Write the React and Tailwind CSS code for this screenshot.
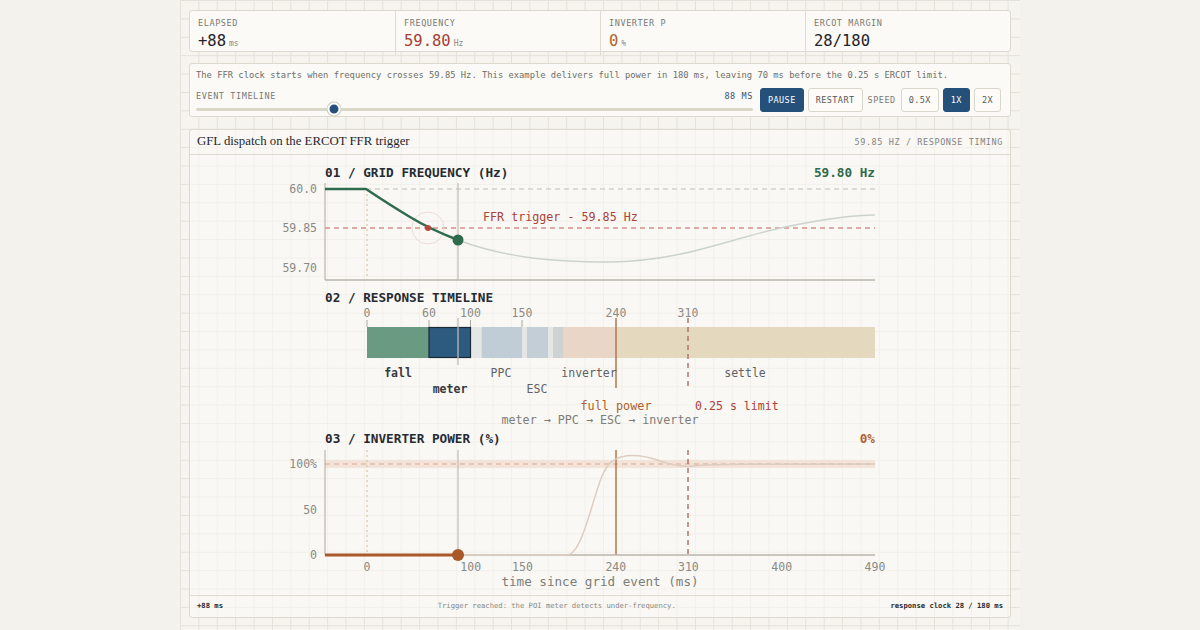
import React from 'react';

const stats = [
  { label: 'ELAPSED', value: '+88', unit: 'ms', color: 'text-[#1f232b]' },
  { label: 'FREQUENCY', value: '59.80', unit: 'Hz', color: 'text-[#a63f36]' },
  { label: 'INVERTER P', value: '0', unit: '%', color: 'text-[#b3622c]' },
  { label: 'ERCOT MARGIN', value: '28/180', unit: '', color: 'text-[#1f232b]' },
];

// time axis: x = 367 + t * 1.0367
const ticks = [
  { t: '0', x: 367 },
  { t: '100', x: 470.7 },
  { t: '150', x: 522.5 },
  { t: '240', x: 615.8 },
  { t: '310', x: 688.4 },
  { t: '400', x: 781.7 },
  { t: '490', x: 875 },
];

function StatCell({ label, value, unit, color }) {
  return (
    <div className="px-[8px] pt-[6px] pb-[5px] border-l border-[#dedbd0] first:border-l-0">
      <div className="text-[8.5px] leading-[12px] tracking-[0.07em] text-[#7a7a76]">{label}</div>
      <div className="flex items-baseline gap-[3px] mt-[3px]">
        <span className={`text-[15.5px] leading-[18px] ${color}`}>{value}</span>
        {unit && <span className="text-[8px] text-[#8a8985]">{unit}</span>}
      </div>
    </div>
  );
}

function Btn({ children, active }) {
  return (
    <button
      className={
        active
          ? 'h-[24px] px-[7px] rounded-[3px] bg-[#25507a] border border-[#25507a] text-white text-[8.5px] tracking-[0.05em]'
          : 'h-[24px] px-[7px] rounded-[3px] bg-[#fdfcf9] border border-[#d9d6cb] text-[#55575a] text-[8.5px] tracking-[0.05em]'
      }
    >
      {children}
    </button>
  );
}

function Chart() {
  const axis = '#b9b6ac';
  const lbl = '#8b8a85';
  return (
    <svg viewBox="189 155 822 440" width="822" height="440" className="block">
      {/* 01 grid frequency */}
      <text x="325" y="177" fontSize="12.7" fontWeight="700" fill="#262b33">01 / GRID FREQUENCY (Hz)</text>
      <text x="875" y="177" textAnchor="end" fontSize="12.7" fontWeight="700" fill="#2f6b4d">59.80 Hz</text>
      <text x="317" y="193" textAnchor="end" fontSize="11.5" fill={lbl}>60.0</text>
      <text x="317" y="232" textAnchor="end" fontSize="11.5" fill={lbl}>59.85</text>
      <text x="317" y="272" textAnchor="end" fontSize="11.5" fill={lbl}>59.70</text>
      <line x1="366" y1="189" x2="875" y2="189" stroke="#bebbb1" strokeWidth="1.2" strokeDasharray="5 4" />
      <line x1="325" y1="228" x2="875" y2="228" stroke="#bd5f57" strokeWidth="1.2" strokeDasharray="5 4" />
      <text x="483" y="221" fontSize="11.7" fill="#a8433b">FFR trigger - 59.85 Hz</text>
      <line x1="367" y1="189" x2="367" y2="280" stroke="#d8c69f" strokeWidth="1.2" strokeDasharray="2 3" />
      <line x1="458" y1="183" x2="458" y2="280" stroke="#c9c8c0" strokeWidth="1.5" />
      <line x1="325" y1="183" x2="325" y2="280" stroke={axis} strokeWidth="1.2" />
      <line x1="325" y1="280" x2="875" y2="280" stroke={axis} strokeWidth="1.4" />
      <path d="M458,240 C500,256 545,262 610,262 C680,262 730,238 790,226 C830,218 855,215 875,215" fill="none" stroke="#ccd3cc" strokeWidth="1.5" />
      <circle cx="428" cy="228" r="16" fill="none" stroke="#ecdcd8" strokeWidth="1" />
      <path d="M325,189 L366,189 C378,197 395,208 410,217 C428,228 445,235 458,240" fill="none" stroke="#2f6b4d" strokeWidth="2.5" strokeLinejoin="round" />
      <circle cx="428" cy="228" r="3" fill="#b5473d" />
      <circle cx="458" cy="240" r="5.5" fill="#2f6b4d" />

      {/* 02 response timeline */}
      <text x="325" y="302" fontSize="12.7" fontWeight="700" fill="#262b33">02 / RESPONSE TIMELINE</text>
      {[
        ['0', 367],
        ['60', 429],
        ['100', 470.5],
        ['150', 522],
        ['240', 616],
        ['310', 688],
      ].map(([t, x]) => (
        <text key={t} x={x} y="317" textAnchor="middle" fontSize="11.5" fill={lbl}>{t}</text>
      ))}
      {[367, 429, 470.5, 522].map((x) => (
        <line key={x} x1={x} y1="320" x2={x} y2="327" stroke="#a9a79f" strokeWidth="1" />
      ))}
      <rect x="367" y="327" width="62" height="31" fill="#6a9a82" />
      <rect x="470.5" y="327" width="11" height="31" fill="#e4e7e6" />
      <rect x="481.5" y="327" width="40.5" height="31" fill="#c0cdd6" />
      <rect x="522" y="327" width="5" height="31" fill="#e3e6e5" />
      <rect x="527" y="327" width="21" height="31" fill="#c3ced7" />
      <rect x="548" y="327" width="5" height="31" fill="#e5e7e5" />
      <rect x="553" y="327" width="10" height="31" fill="#cfd2d3" />
      <rect x="563" y="327" width="53" height="31" fill="#ead6c6" />
      <rect x="616" y="327" width="259" height="31" fill="#e4d8be" />
      <rect x="429" y="327.5" width="41.5" height="30" fill="#2d5a7f" stroke="#1c2a38" strokeWidth="1.2" />
      <line x1="458" y1="318" x2="458" y2="365" stroke="#bdbcb4" strokeWidth="1.3" />
      <line x1="616" y1="318" x2="616" y2="388" stroke="#b5764b" strokeWidth="1.5" />
      <line x1="688" y1="318" x2="688" y2="388" stroke="#b4736c" strokeWidth="1.5" strokeDasharray="5 4" />
      <text x="398" y="377" textAnchor="middle" fontSize="11.5" fontWeight="700" fill="#34383e">fall</text>
      <text x="450" y="393" textAnchor="middle" fontSize="11.5" fontWeight="700" fill="#34383e">meter</text>
      <text x="501" y="377" textAnchor="middle" fontSize="11.5" fill="#5f6166">PPC</text>
      <text x="537" y="393" textAnchor="middle" fontSize="11.5" fill="#5f6166">ESC</text>
      <text x="589" y="377" textAnchor="middle" fontSize="11.5" fill="#5f6166">inverter</text>
      <text x="745" y="377" textAnchor="middle" fontSize="11.5" fill="#5f6166">settle</text>
      <text x="616" y="410" textAnchor="middle" fontSize="11.8" fill="#b0612c">full power</text>
      <text x="695" y="410" fontSize="11.6" fill="#a8433b">0.25 s limit</text>
      <text x="600" y="424" textAnchor="middle" fontSize="11.7" fill="#7d7d79">meter → PPC → ESC → inverter</text>

      {/* 03 inverter power */}
      <text x="325" y="443" fontSize="12.7" fontWeight="700" fill="#262b33">03 / INVERTER POWER (%)</text>
      <text x="875" y="443" textAnchor="end" fontSize="12.7" fontWeight="700" fill="#b0612c">0%</text>
      <text x="317" y="468" textAnchor="end" fontSize="11.5" fill={lbl}>100%</text>
      <text x="317" y="514" textAnchor="end" fontSize="11.5" fill={lbl}>50</text>
      <text x="317" y="559" textAnchor="end" fontSize="11.5" fill={lbl}>0</text>
      <rect x="325" y="460" width="550" height="8" fill="#f1dccf" opacity="0.75" />
      <line x1="325" y1="464" x2="875" y2="464" stroke="#d6a992" strokeWidth="1.2" strokeDasharray="5 4" />
      <line x1="367" y1="450" x2="367" y2="555" stroke="#d8c69f" strokeWidth="1.2" strokeDasharray="2 3" />
      <line x1="458" y1="450" x2="458" y2="555" stroke="#c9c8c0" strokeWidth="1.5" />
      <line x1="616" y1="450" x2="616" y2="555" stroke="#b5764b" strokeWidth="1.5" />
      <line x1="688" y1="450" x2="688" y2="555" stroke="#b4736c" strokeWidth="1.5" strokeDasharray="5 4" />
      <line x1="325" y1="450" x2="325" y2="555" stroke={axis} strokeWidth="1.2" />
      <line x1="325" y1="555" x2="875" y2="555" stroke={axis} strokeWidth="1.4" />
      <path d="M458,555 L567,555 C582,555 592,500 602,476 C608,463 613,459 621,457 C632,454 646,456 660,461 C672,465 682,467 692,466 C712,464 740,464 875,464" fill="none" stroke="#ddcdc0" strokeWidth="1.5" />
      <line x1="325" y1="555" x2="458" y2="555" stroke="#a9582a" strokeWidth="3" />
      <circle cx="458" cy="555" r="6" fill="#a9582a" />
      {ticks.map((k) => (
        <text key={k.t} x={k.x} y="571" textAnchor="middle" fontSize="11.5" fill={lbl}>{k.t}</text>
      ))}
      <text x="600" y="586" textAnchor="middle" fontSize="12.6" fill="#7d7d79">time since grid event (ms)</text>
    </svg>
  );
}

export default function App() {
  return (
    <div className="w-full h-[630px] bg-[#f3f2ed] flex justify-center overflow-hidden font-['DejaVu_Sans_Mono',monospace]">
      <div className="w-[840px] h-full px-[9px] pt-[10px] flex flex-col bg-[#f5f4ef] bg-[linear-gradient(to_right,#e3e1d8_1px,transparent_1px),linear-gradient(to_bottom,#e3e1d8_1px,transparent_1px)] bg-[size:18.4px_18.4px]">
        {/* readouts */}
        <div className="grid grid-cols-4 h-[42px] bg-[#fbfaf6] border border-[#dcd9ce] rounded-[3px]">
          {stats.map((s) => (
            <StatCell key={s.label} {...s} />
          ))}
        </div>

        {/* playback controls */}
        <div className="mt-[11px] h-[54px] bg-[#fbfaf6] border border-[#dcd9ce] rounded-[3px] pl-[6px] pr-[9px] pt-[5px]">
          <p className="text-[8.8px] leading-[12px] text-[#6e6e6a] whitespace-nowrap">
            The FFR clock starts when frequency crosses 59.85 Hz. This example delivers full power in 180 ms, leaving 70 ms before the 0.25 s ERCOT limit.
          </p>
          <div className="flex items-center mt-[7px] gap-[4px]">
            <div className="flex-1 mr-[3px]">
              <div className="flex justify-between items-center text-[8.5px] leading-[12px] tracking-[0.07em]">
                <span className="text-[#7a7a76]">EVENT TIMELINE</span>
                <span className="text-[#3f5266]">88 MS</span>
              </div>
              <div className="relative h-[3px] mt-[6px] rounded-full bg-[#dad7c9]">
                <div className="absolute left-[24.8%] top-1/2 -translate-x-1/2 -translate-y-1/2 w-[13px] h-[13px] rounded-full bg-[#25507a] border-[2.5px] border-white shadow-[0_0_0_1px_#cfccc2]" />
              </div>
            </div>
            <Btn active>PAUSE</Btn>
            <Btn>RESTART</Btn>
            <span className="text-[8.5px] tracking-[0.06em] text-[#7a7a76] px-[1px]">SPEED</span>
            <Btn>0.5X</Btn>
            <Btn active>1X</Btn>
            <Btn>2X</Btn>
          </div>
        </div>

        {/* chart panel */}
        <div className="mt-[12px] h-[489px] bg-[#fbfaf6]/60 border border-[#dcd9ce] rounded-[3px] flex flex-col">
          <div className="h-[26px] px-[7px] flex items-center justify-between border-b border-[#dedbd0]">
            <span className="font-['Liberation_Serif',serif] text-[12.8px] text-[#24272d]">GFL dispatch on the ERCOT FFR trigger</span>
            <span className="text-[8.5px] tracking-[0.07em] text-[#85847f]">59.85 HZ / RESPONSE TIMING</span>
          </div>
          <div className="flex-1 -mx-px">
            <Chart />
          </div>
          <div className="h-[23px] px-[7px] flex items-center justify-between border-t border-[#dedbd0] text-[7.2px]">
            <span className="font-bold text-[#2a2d33]">+88 ms</span>
            <span className="text-[#8a8985]">Trigger reached: the POI meter detects under-frequency.</span>
            <span className="font-bold text-[#2a2d33]">response clock 28 / 180 ms</span>
          </div>
        </div>
      </div>
    </div>
  );
}
